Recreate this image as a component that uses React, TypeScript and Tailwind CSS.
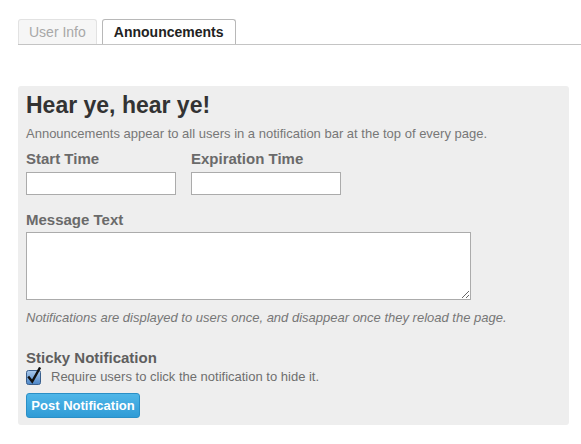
import { useState } from 'react'

const font = { fontFamily: '"Liberation Sans", Arial, Helvetica, sans-serif' }

function StickyCheck({ checked, onToggle }: { checked: boolean; onToggle: () => void }) {
  return (
    <button type="button" onClick={onToggle} className="relative h-[14px] w-[14px] shrink-0">
      <svg width="16" height="18" viewBox="0 0 16 18" className="absolute left-0 top-[-3px]">
        <defs>
          <linearGradient id="cb" x1="0" y1="0" x2="0" y2="1">
            <stop offset="0" stopColor="#a9c9ec" />
            <stop offset="1" stopColor="#4b86c8" />
          </linearGradient>
        </defs>
        <rect x="0.5" y="3.5" width="14" height="14" rx="2" fill="url(#cb)" stroke="#3a5f8c" />
        {checked && (
          <path d="M3 10.5 L6.2 14.5 L13.5 1.5" fill="none" stroke="#111" strokeWidth="2.4" strokeLinecap="square" />
        )}
      </svg>
    </button>
  )
}

export default function App() {
  const [sticky, setSticky] = useState(true)

  return (
    <div className="min-h-[444px] w-full bg-white" style={font}>
      {/* Tabs */}
      <div className="ml-[18px] flex gap-[5px] border-b border-[#c4c4c4] pt-[19px]">
        <div className="flex h-[25px] items-center rounded-t-[3px] border border-b-0 border-[#e2e2e2] bg-[#f6f6f6] px-[10px] text-[14px] text-[#a8a8a8]">
          User Info
        </div>
        <div className="flex h-[25px] items-center rounded-t-[3px] border border-b-0 border-[#b8b8b8] bg-white px-[11px] text-[14px] font-bold text-[#222]">
          Announcements
        </div>
      </div>

      {/* Panel */}
      <div className="ml-[18px] mt-[41px] w-[551px] rounded-[3px] bg-[#eeeeee] px-[8px] pb-[7px] pt-[6px]">
        <h1 className="text-[23px] font-bold leading-[26px] text-[#333]">Hear ye, hear ye!</h1>
        <p className="mt-[8px] text-[13px] leading-[16px] text-[#777]">
          Announcements appear to all users in a notification bar at the top of every page.
        </p>

        <div className="mt-[8px] flex gap-[15px]">
          <div className="flex flex-col">
            <label className="text-[15px] font-bold leading-[18px] text-[#6a6a6a]">Start Time</label>
            <input className="mt-[4px] h-[23px] w-[150px] border border-[#ababab] bg-white px-1 text-[13px] outline-none" />
          </div>
          <div className="flex flex-col">
            <label className="text-[15px] font-bold leading-[18px] text-[#6a6a6a]">Expiration Time</label>
            <input className="mt-[4px] h-[23px] w-[150px] border border-[#ababab] bg-white px-1 text-[13px] outline-none" />
          </div>
        </div>

        <label className="mt-[16px] block text-[15px] font-bold leading-[18px] text-[#6a6a6a]">Message Text</label>
        <textarea className="mt-[3px] block h-[68px] w-[445px] border border-[#ababab] bg-white p-1 text-[13px] outline-none" />

        <p className="mt-[10px] text-[13px] italic leading-[16px] text-[#777]">
          Notifications are displayed to users once, and disappear once they reload the page.
        </p>

        <div className="mt-[23px] text-[15px] font-bold leading-[18px] text-[#5e5e5e]">Sticky Notification</div>
        <div className="mt-[2px] flex h-[16px] items-center gap-[11px]">
          <StickyCheck checked={sticky} onToggle={() => setSticky(!sticky)} />
          <span className="text-[13px] text-[#6f6f6f]">Require users to click the notification to hide it.</span>
        </div>

        <button
          type="button"
          className="mt-[8px] h-[25px] w-[114px] rounded-[3px] border border-[#2a8fc6] bg-gradient-to-b from-[#4fb6e8] to-[#2f9bd6] text-[13px] font-bold text-white"
        >
          Post Notification
        </button>
      </div>
    </div>
  )
}
